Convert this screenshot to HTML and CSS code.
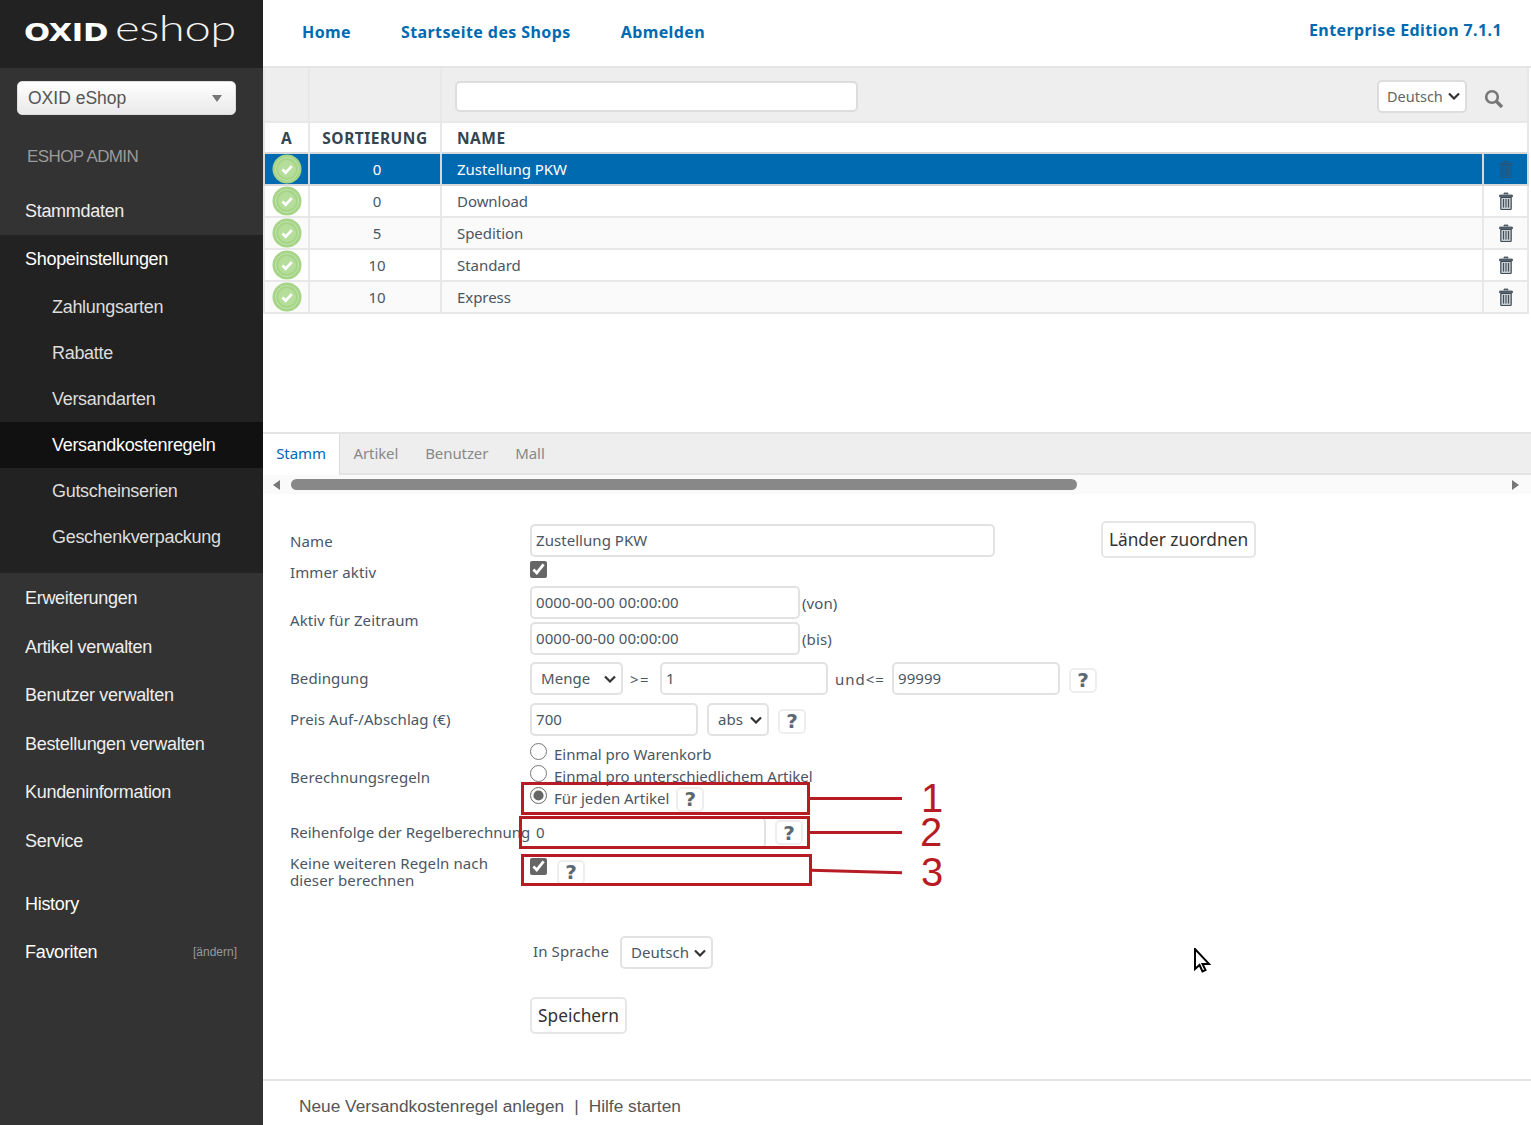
FILE: index.html
```html
<!DOCTYPE html>
<html lang="de">
<head>
  <meta charset="UTF-8">
  <title>OXID eShop Admin</title>
  <link rel="stylesheet" href="styles.css">
</head>
<body>
  <svg class="icon-defs" width="0" height="0">
    <symbol id="ok" viewBox="0 0 30 30">
      <circle cx="15" cy="15" r="14.5" fill="#a6d587"/>
      <circle cx="15" cy="15" r="11.5" fill="none" stroke="#c3e3ad" stroke-width="1"/>
      <circle cx="15" cy="15" r="9" fill="#b5dd9b"/>
      <path d="M10.5 15.5l3.2 3.2 6-6.6" fill="none" stroke="#fff" stroke-width="2.8"/>
    </symbol>
    <symbol id="trash" viewBox="0 0 14 18">
      <path d="M5 2.2V1h4v1.2M.6 3h12.8v1.8H.6z" fill="#5a6873" stroke="#3f4d58" stroke-width=".8"/>
      <path d="M1.8 5.4h10.4v11.2q0 .9-.9.9H2.7q-.9 0-.9-.9z" fill="#c5ccd1" stroke="#3f4d58" stroke-width="1.2"/>
      <path d="M4.5 7v8.5M7 7v8.5M9.5 7v8.5" stroke="#3f4d58" stroke-width="1.1"/>
    </symbol>
    <symbol id="trash-dark" viewBox="0 0 14 18">
      <path d="M5 2.2V1h4v1.2M.6 3h12.8v1.8H.6z" fill="#1f5a85" stroke="#1f5a85" stroke-width=".8"/>
      <path d="M1.8 5.4h10.4v11.2q0 .9-.9.9H2.7q-.9 0-.9-.9z" fill="#0f639f" stroke="#1f5a85" stroke-width="1.2"/>
      <path d="M4.5 7v8.5M7 7v8.5M9.5 7v8.5" stroke="#1f5a85" stroke-width="1.1"/>
    </symbol>
  </svg>

  <div class="layout">
    <aside class="sidebar">
      <div class="logo">
        <svg width="225" height="50" viewBox="0 0 225 50">
          <text class="logo-oxid" x="0" y="41" textLength="84" lengthAdjust="spacingAndGlyphs">OXID</text>
          <text class="logo-eshop" x="91" y="41" textLength="121" lengthAdjust="spacingAndGlyphs">eshop</text>
        </svg>
      </div>
      <div class="sidebar-top">
        <div class="shop-select">OXID eShop<span class="shop-caret"></span></div>
        <div class="side-title">ESHOP ADMIN</div>
        <a class="side-link">Stammdaten</a>
      </div>
      <div class="side-open">
        <a class="side-link side-head">Shopeinstellungen</a>
        <a class="side-sub">Zahlungsarten</a>
        <a class="side-sub">Rabatte</a>
        <a class="side-sub">Versandarten</a>
        <a class="side-sub side-current">Versandkostenregeln</a>
        <a class="side-sub">Gutscheinserien</a>
        <a class="side-sub">Geschenkverpackung</a>
      </div>
      <div class="side-rest">
        <a class="side-link">Erweiterungen</a>
        <a class="side-link">Artikel verwalten</a>
        <a class="side-link">Benutzer verwalten</a>
        <a class="side-link">Bestellungen verwalten</a>
        <a class="side-link">Kundeninformation</a>
        <a class="side-link">Service</a>
        <a class="side-link side-history">History</a>
        <a class="side-link side-fav">Favoriten<span class="fav-edit">[ändern]</span></a>
      </div>
    </aside>

    <main class="content">
      <nav class="topnav">
        <a>Home</a>
        <a>Startseite des Shops</a>
        <a>Abmelden</a>
        <span class="edition">Enterprise Edition 7.1.1</span>
      </nav>

      <table class="list">
        <colgroup>
          <col class="col-a">
          <col class="col-sort">
          <col>
          <col class="col-del">
        </colgroup>
        <tr class="filter-row">
          <td></td>
          <td></td>
          <td colspan="2">
            <div class="filter-cell">
              <input class="filter-input" type="text">
              <select class="filter-lang"><option>Deutsch</option></select>
              <svg class="search-icon" width="20" height="20" viewBox="0 0 20 20">
                <circle cx="8" cy="8" r="5.8" fill="none" stroke="#777" stroke-width="2.6"/>
                <path d="M12.5 12.5l5.5 5.5" stroke="#777" stroke-width="3.4"/>
              </svg>
            </div>
          </td>
        </tr>
        <tr class="head-row">
          <th>A</th>
          <th>SORTIERUNG</th>
          <th class="cell-name" colspan="2">NAME</th>
        </tr>
        <tr class="selected">
          <td class="cell-mid"><svg class="ok-icon"><use href="#ok"/></svg></td>
          <td class="cell-mid cell-sort">0</td>
          <td class="cell-name">Zustellung PKW</td>
          <td class="cell-mid"><svg class="trash-icon"><use href="#trash-dark"/></svg></td>
        </tr>
        <tr>
          <td class="cell-mid"><svg class="ok-icon"><use href="#ok"/></svg></td>
          <td class="cell-mid cell-sort">0</td>
          <td class="cell-name">Download</td>
          <td class="cell-mid"><svg class="trash-icon"><use href="#trash"/></svg></td>
        </tr>
        <tr class="odd">
          <td class="cell-mid"><svg class="ok-icon"><use href="#ok"/></svg></td>
          <td class="cell-mid cell-sort">5</td>
          <td class="cell-name">Spedition</td>
          <td class="cell-mid"><svg class="trash-icon"><use href="#trash"/></svg></td>
        </tr>
        <tr>
          <td class="cell-mid"><svg class="ok-icon"><use href="#ok"/></svg></td>
          <td class="cell-mid cell-sort">10</td>
          <td class="cell-name">Standard</td>
          <td class="cell-mid"><svg class="trash-icon"><use href="#trash"/></svg></td>
        </tr>
        <tr class="odd">
          <td class="cell-mid"><svg class="ok-icon"><use href="#ok"/></svg></td>
          <td class="cell-mid cell-sort">10</td>
          <td class="cell-name">Express</td>
          <td class="cell-mid"><svg class="trash-icon"><use href="#trash"/></svg></td>
        </tr>
      </table>

      <div class="tabs">
        <a class="tab tab-active">Stamm</a>
        <a class="tab">Artikel</a>
        <a class="tab">Benutzer</a>
        <a class="tab">Mall</a>
      </div>
      <div class="hscroll">
        <span class="arrow arrow-left"></span>
        <div class="hscroll-track"><div class="hscroll-thumb"></div></div>
        <span class="arrow arrow-right"></span>
      </div>

      <form class="edit">
        <div class="row row-name">
          <label class="lbl lbl-flat">Name</label>
          <input class="field w-name" type="text" value="Zustellung PKW">
          <button class="btn btn-assign" type="button">Länder zuordnen</button>
        </div>
        <div class="row row-always">
          <label class="lbl lbl-flat">Immer aktiv</label>
          <input class="check check-always" type="checkbox" checked>
        </div>
        <div class="row row-period">
          <label class="lbl">Aktiv für Zeitraum</label>
          <div class="period">
            <div class="inline"><input class="field w-date" type="text" value="0000-00-00 00:00:00"><span>(von)</span></div>
            <div class="inline"><input class="field w-date" type="text" value="0000-00-00 00:00:00"><span>(bis)</span></div>
          </div>
        </div>
        <div class="row row-cond">
          <label class="lbl">Bedingung</label>
          <select class="sel w-unit"><option>Menge</option></select>
          <span class="op">&gt;=</span>
          <input class="field w-num" type="text" value="1">
          <span class="op op-and">und&lt;=</span>
          <input class="field w-num" type="text" value="99999">
          <span class="help help-cond">?</span>
        </div>
        <div class="row row-price">
          <label class="lbl">Preis Auf-/Abschlag (€)</label>
          <input class="field w-price" type="text" value="700">
          <select class="sel w-abs"><option>abs</option></select>
          <span class="help help-price">?</span>
        </div>
        <div class="row row-calc">
          <label class="lbl lbl-calc">Berechnungsregeln</label>
          <div class="radios">
            <label class="radio"><input type="radio" name="calc"><span>Einmal pro Warenkorb</span></label>
            <label class="radio"><input type="radio" name="calc"><span>Einmal pro unterschiedlichem Artikel</span></label>
            <label class="radio"><input type="radio" name="calc" checked><span>Für jeden Artikel</span><span class="help help-radio">?</span></label>
          </div>
        </div>
        <div class="row row-order">
          <label class="lbl lbl-order">Reihenfolge der Regelberechnung</label>
          <input class="field w-order" type="text" value="0">
          <span class="help help-order">?</span>
        </div>
        <div class="row row-stop">
          <label class="lbl lbl-two">Keine weiteren Regeln nach dieser berechnen</label>
          <input class="check check-stop" type="checkbox" checked>
          <span class="help help-stop">?</span>
        </div>
        <div class="row row-lang">
          <span class="lang-label">In Sprache</span>
          <select class="sel w-lang"><option>Deutsch</option></select>
        </div>
        <div class="row row-save">
          <button class="btn btn-save" type="button">Speichern</button>
        </div>

        <!-- red markers laid over the screenshot -->
        <div class="mark mark-1"></div>
        <div class="mark mark-2"></div>
        <div class="mark mark-3"></div>
        <div class="mark-line line-1"></div>
        <div class="mark-line line-2"></div>
        <div class="mark-line line-3"></div>
        <span class="mark-no no-1">1</span>
        <span class="mark-no no-2">2</span>
        <span class="mark-no no-3">3</span>
        <svg class="cursor" width="18" height="26" viewBox="0 0 18 26">
          <path d="M1 1v20l4.5-4 3 6.5 3-1.4-3-6.2H15z" fill="#fff" stroke="#000" stroke-width="2"/>
        </svg>
      </form>

      <footer class="foot">
        <a>Neue Versandkostenregel anlegen</a>
        <span class="foot-sep">|</span>
        <a>Hilfe starten</a>
      </footer>
    </main>
  </div>
</body>
</html>
```
FILE: styles.css
```css
* {
  box-sizing: border-box;
}

body {
  margin: 0;
  background: #fff;
  color: #4a5663;
  font-family: "Noto Sans", sans-serif;
  font-size: 15px;
  letter-spacing: .1px;
}

.icon-defs {
  position: absolute;
}

.layout {
  display: flex;
  height: 1125px;
  overflow: hidden;
}

/* Sidebar */
.sidebar {
  width: 263px;
  flex: none;
  background: #333;
  font-family: "Liberation Sans", Arial, sans-serif;
  font-size: 18px;
  color: #eee;
  letter-spacing: -0.3px;
}

.logo {
  height: 68px;
  background: #222;
  padding: 0 0 0 24px;
}

.logo-oxid {
  font-family: "DejaVu Sans", sans-serif;
  font-weight: bold;
  font-size: 25px;
  fill: #fff;
}

.logo-eshop {
  font-family: "Lato", sans-serif;
  font-weight: 300;
  font-size: 36px;
  fill: #f4f4f4;
}

.sidebar-top {
  height: 167px;
  padding-top: 13px;
}

.shop-select {
  display: flex;
  align-items: center;
  justify-content: space-between;
  width: 219px;
  height: 34px;
  margin-left: 17px;
  padding: 0 13px 0 10px;
  border-radius: 5px;
  border: 1px solid #ddd;
  background: linear-gradient(#fff, #e9e9e9);
  color: #555;
  font-size: 17.5px;
  letter-spacing: 0;
}

.shop-caret {
  border-left: 5px solid transparent;
  border-right: 5px solid transparent;
  border-top: 7px solid #777;
}

.side-title {
  margin: 31px 0 0 27px;
  color: #9a9a9a;
  line-height: 22px;
  font-size: 17px;
  letter-spacing: -0.6px;
}

.side-link {
  display: block;
  padding-left: 25px;
  line-height: 22px;
}

.sidebar-top .side-link {
  margin-top: 32px;
}

.side-open {
  height: 338px;
  padding-top: 13px;
  background: #222;
  color: #fff;
}

.side-head {
  color: #fff;
  margin-bottom: 14px;
}

.side-sub {
  display: block;
  height: 46px;
  padding-left: 52px;
  line-height: 46px;
  color: #ddd;
}

.side-current {
  background: #111;
  color: #fff;
}

.side-rest {
  padding-top: 14px;
}

.side-rest .side-link {
  height: 48.6px;
  line-height: 22px;
}

.side-rest .side-history {
  margin-top: 14px;
  color: #fff;
}

.side-rest .side-fav {
  display: flex;
  justify-content: space-between;
  padding-right: 26px;
  color: #fff;
}

.fav-edit {
  font-size: 12px;
  letter-spacing: 0;
  color: #999;
}

/* Main */
.content {
  flex: 1;
  min-width: 0;
  position: relative;
  display: flex;
  flex-direction: column;
}

.topnav {
  display: flex;
  align-items: center;
  height: 68px;
  padding: 0 29px 2px 39px;
  border-bottom: 2px solid #e4e4e4;
  color: #006ab1;
  font-weight: bold;
  font-size: 16px;
  letter-spacing: .4px;
}

.topnav a {
  margin-right: 50px;
}

.edition {
  margin-left: auto;
  margin-top: -5px;
}

.list {
  width: 1266px;
  border-collapse: collapse;
  table-layout: fixed;
  letter-spacing: -.05px;
}

.col-a { width: 45px; }
.col-sort { width: 132px; }
.col-del { width: 45px; }

.list td,
.list th {
  padding: 0;
  border: 2px solid #e8e8e8;
  height: 32px;
}

.list .filter-row td {
  height: 54px;
  background: #eee;
  border-top: 0;
}

.filter-cell {
  display: flex;
  align-items: center;
  padding: 3px 23px 0 13px;
}

.filter-input {
  width: 403px;
  height: 31px;
  border: 2px solid #ddd;
  border-radius: 5px;
  background: #fff;
}

.sel,
.filter-lang {
  appearance: none;
  background: #fff url("data:image/svg+xml,%3Csvg xmlns='http://www.w3.org/2000/svg' width='12' height='8'%3E%3Cpath d='M1 1.5l5 5 5-5' fill='none' stroke='%23333' stroke-width='2.2'/%3E%3C/svg%3E") no-repeat right 5px center;
}

.filter-lang {
  margin-left: auto;
  width: 90px;
  height: 33px;
  padding-left: 8px;
  border: 2px solid #ddd;
  border-radius: 5px;
  color: #666;
  font: 14.5px "Noto Sans", sans-serif;
}

.search-icon {
  margin: 6px 0 0 17px;
}

.list .head-row th {
  border-top: 0;
  border-bottom: 0;
  height: 31px;
  padding-top: 1px;
  color: #344452;
  font-size: 15.5px;
  letter-spacing: .5px;
}

.cell-mid {
  text-align: center;
}

.list .cell-sort {
  padding-left: 4px;
}

.list .cell-name {
  text-align: left;
  padding-left: 15px;
}

.list .selected td {
  background: #006ab1;
  color: #fff;
  border-color: #d8d8d8;
}

.list .odd td {
  background: #fafafa;
}

.ok-icon {
  display: block;
  width: 30px;
  height: 30px;
  margin: 0 auto;
}

.trash-icon {
  display: block;
  width: 14px;
  height: 18px;
  margin: 0 auto;
}

/* Tabs */
.tabs {
  display: flex;
  height: 43px;
  margin-top: 118px;
  border-top: 2px solid #e4e4e4;
  border-bottom: 2px solid #e4e4e4;
  background: #eee;
  color: #888;
  letter-spacing: -.1px;
}

.tab {
  padding: 0 13.5px;
  line-height: 39px;
}

.tab:first-child {
  width: 77px;
  text-align: center;
  padding: 0;
}

.tab-active {
  background: #fff;
  color: #006ab1;
  border-right: 1px solid #ddd;
  height: 41px;
}

.hscroll {
  display: flex;
  align-items: center;
  height: 19px;
  padding: 0 12px 0 10px;
  background: #fafafa;
}

.hscroll-track {
  flex: 1;
  padding: 0 11px;
}

.hscroll-thumb {
  width: 786px;
  height: 11px;
  border-radius: 6px;
  background: #888;
}

.arrow {
  border-top: 5px solid transparent;
  border-bottom: 5px solid transparent;
}

.arrow-left {
  border-right: 7px solid #777;
}

.arrow-right {
  border-left: 7px solid #777;
}

/* Edit form */
.edit {
  flex: 1;
  padding-left: 27px;
}

.row {
  display: flex;
  align-items: center;
}

.lbl {
  flex: none;
  width: 240px;
  margin-top: -2px;
  white-space: nowrap;
}

.lbl-flat {
  margin-top: 0;
}

.lbl-two {
  margin-top: 0;
  white-space: normal;
  padding-right: 30px;
  line-height: 17px;
}

.lbl-calc {
  margin-top: 2px;
}

.lbl-order {
  letter-spacing: -.03px;
}

.field,
.sel {
  height: 33px;
  border: 2px solid #e2e2e2;
  border-radius: 5px;
  color: #4a5663;
  font: 15px "Noto Sans", sans-serif;
  letter-spacing: .05px;
}

.field {
  padding: 0 4px 2px;
  background: #fff;
}

.sel {
  padding: 0 0 2px 9px;
}

.w-name { width: 465px; }
.w-date { width: 270px; }
.w-unit { width: 93px; }
.w-num { width: 168px; }
.w-price { width: 168px; }
.w-abs { width: 62px; margin-left: 9px; }
.w-order { width: 236px; height: 31px; padding-left: 6px; border-top: 0; border-left: 0; border-bottom: 0; }
.w-lang { width: 93px; margin-left: 11px; }

.check {
  width: 17px;
  height: 17px;
  margin: 0;
  accent-color: #666;
}

.check-always { margin-top: -4px; }
.check-stop { margin-top: -12px; }

.row-name { margin-top: 30px; height: 33px; }
.row-always { height: 29px; }
.row-cond { margin-top: 7px; }
.row-price { margin-top: 8px; }
.row-calc { margin-top: 7px; }
.row-order { margin-top: 8px; }
.row-stop { margin-top: 6px; height: 36px; }
.row-lang { margin-top: 46px; padding-left: 243px; }
.row-save { margin-top: 28px; padding-left: 240px; }

.lang-label {
  margin-top: -4px;
}

.btn {
  background: #fff;
  border: 2px solid #e6e6e6;
  border-radius: 5px;
  color: #333;
  font: 17.3px "Noto Sans", sans-serif;
  white-space: nowrap;
  padding: 0;
}

.btn-assign {
  width: 155px;
  height: 37px;
  margin-left: 106px;
  margin-top: -2px;
}

.btn-save {
  width: 97px;
  height: 37px;
}

.period {
  display: flex;
  flex-direction: column;
  gap: 3px;
}

.inline {
  display: flex;
  align-items: center;
  gap: 2px;
}

.op {
  flex: none;
  width: 37px;
  padding-left: 7px;
  letter-spacing: 1.5px;
}

.op-and {
  width: 64px;
  letter-spacing: 1px;
}

.help {
  display: inline-flex;
  align-items: center;
  justify-content: center;
  width: 28px;
  height: 25px;
  border: 2px solid #eee;
  border-radius: 5px;
  color: #5a6873;
  font-family: "DejaVu Sans", sans-serif;
  font-weight: bold;
  font-size: 20px;
  line-height: 20px;
}

.help-cond { margin: 3px 0 0 9px; }
.help-price { margin: 3px 0 0 9px; }
.help-radio { margin: 2px 0 0 7px; }
.help-order { margin-left: 9px; }
.help-stop { margin-left: 10px; }

.radios {
  display: flex;
  flex-direction: column;
  height: 66px;
  letter-spacing: -.03px;
}

.radio {
  display: flex;
  align-items: center;
  height: 22px;
}

.radio input {
  width: 17px;
  height: 17px;
  margin: -6px 7px 0 0;
  accent-color: #666;
}

/* overlays: offsets are from .content */
.mark {
  position: absolute;
  border: 3px solid #b71c24;
}

.mark-1 { left: 258px; top: 782px; width: 289px; height: 33px; }
.mark-2 { left: 256px; top: 816px; width: 291px; height: 33px; }
.mark-3 { left: 258px; top: 854px; width: 291px; height: 32px; }

.mark-line {
  position: absolute;
  height: 3px;
  background: #b71c24;
}

.line-1 { left: 546px; top: 797px; width: 93px; }
.line-2 { left: 546px; top: 831px; width: 93px; }
.line-3 { left: 548px; top: 870px; width: 91px; transform: rotate(1.5deg); }

.mark-no {
  position: absolute;
  font: 40px "Liberation Sans", Arial, sans-serif;
  line-height: 30px;
  letter-spacing: 0;
  color: #b71c24;
}

.no-1 { left: 658px; top: 783px; }
.no-2 { left: 657px; top: 817px; }
.no-3 { left: 658px; top: 857px; }

.cursor {
  position: absolute;
  left: 931px;
  top: 948px;
}

.foot {
  height: 46px;
  padding: 15px 0 0 36px;
  border-top: 2px solid #e4e4e4;
  font-family: "Liberation Sans", Arial, sans-serif;
  font-size: 17.3px;
  letter-spacing: 0;
  color: #555;
  display: flex;
  gap: 10px;
}
```
